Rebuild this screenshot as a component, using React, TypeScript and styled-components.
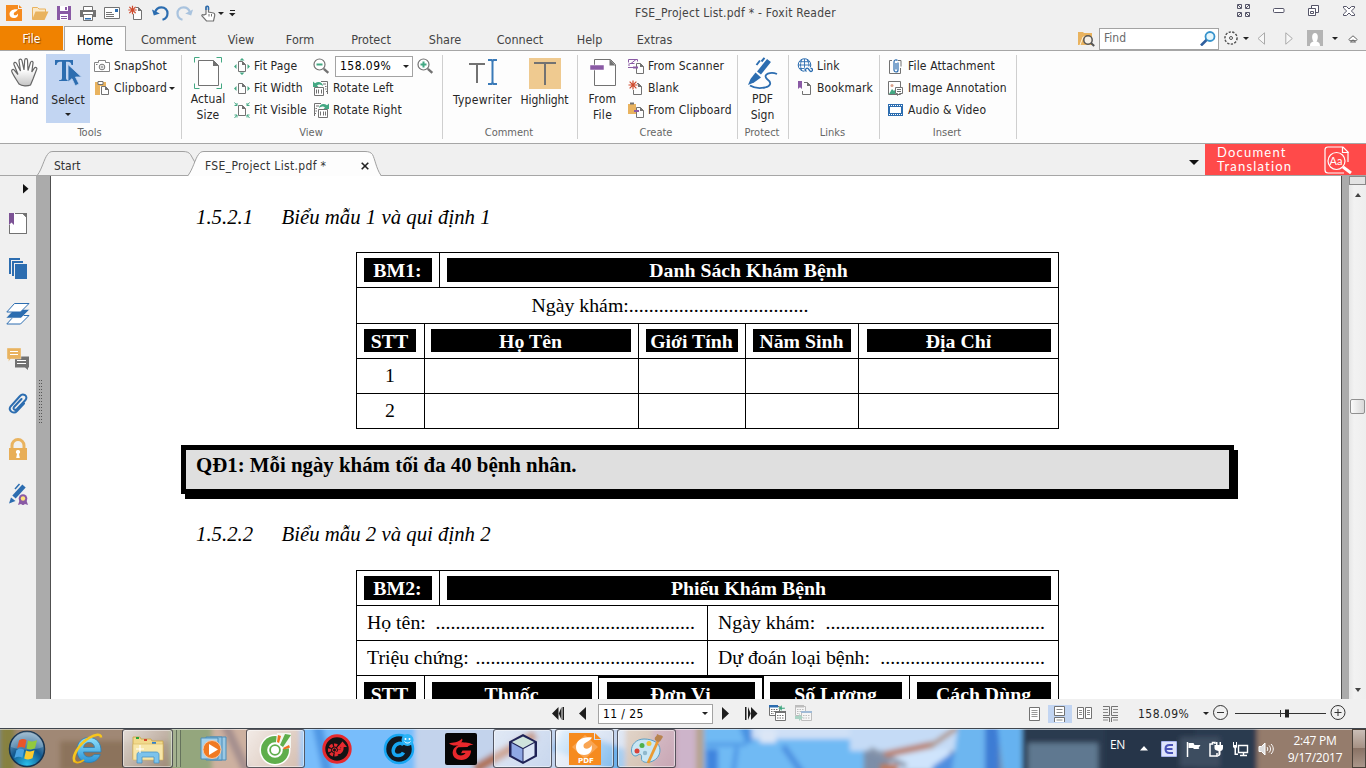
import React from 'react';
import styled, { createGlobalStyle } from 'styled-components';

const UI = '"DejaVu Sans Condensed", "DejaVu Sans", "Noto Sans", sans-serif';
const SERIF = '"Liberation Serif", "Times New Roman", serif';
const BLUE = '#2c6db0';
const GRAY = '#727272';
const GREEN = '#43a883';
const AMBER = '#e9b35f';
const PURPLE = '#8a5aa5';

const Global = createGlobalStyle`
  * { box-sizing: border-box; }
  body { margin: 0; overflow: hidden; background: #f0f0f0; }
  svg { display: block; flex: none; }
`;

/* ---------- shell ---------- */
const Window = styled.div`
  width: 1366px;
  height: 768px;
  display: flex;
  flex-direction: column;
  overflow: hidden;
  background: #f0f0f0;
  font-family: ${UI};
  font-stretch: condensed;
  font-size: 12px;
  color: #262626;
  white-space: nowrap;
`;

const TitleBar = styled.header`
  height: 26px;
  display: flex;
  align-items: center;
`;
const QuickAccess = styled.div`
  width: 635px;
  height: 26px;
  padding-left: 6px;
  display: flex;
  align-items: center;
`;
const Slot = styled.span<{ $w: number; $down?: number }>`
  width: ${p => p.$w}px;
  flex: none;
  display: flex;
  align-items: center;
  padding-top: ${p => Math.max(0, p.$down ?? 0)}px;
  padding-bottom: ${p => Math.max(0, -(p.$down ?? 0))}px;
`;
const TitleText = styled.div`
  width: 600px;
  padding-left: 0;
  font-size: 12px;
  letter-spacing: 0.24px;
  color: #444;
`;

const MenuRow = styled.nav`
  height: 25px;
  display: flex;
  border-bottom: 1px solid #a6a6a6;
`;
const FileTab = styled.div`
  width: 63px;
  height: 24px;
  line-height: 27px;
  text-align: center;
  font-size: 12px;
  background: #f08200;
  color: #fff;
  text-shadow: 1px 1px 1px #8a4a00;
`;
const MenuTab = styled.div<{ $w: number; $active?: boolean }>`
  width: ${p => p.$w}px;
  height: 25px;
  line-height: 27px;
  text-align: center;
  font-size: 12.5px;
  color: ${p => (p.$active ? '#000' : '#444')};
  ${p =>
    p.$active &&
    `background:#fdfdfd; border:1px solid #a6a6a6; border-bottom:0; margin-left:1px; line-height:26px; font-size:13.7px;`}
`;
const MenuTools = styled.div`
  margin-left: auto;
  width: 288px;
  display: flex;
  align-items: center;
  height: 24px;
`;
const FindBox = styled.div`
  width: 120px;
  height: 22px;
  margin-top: 1px;
  padding: 0 2px 2px 4px;
  border: 1px solid #a3a3a3;
  background: #fff;
  display: flex;
  align-items: center;
  justify-content: space-between;
  color: #6a6a6a;
`;

/* ---------- ribbon ---------- */
const Ribbon = styled.section`
  height: 93px;
  display: flex;
  background: #fdfdfd;
  border-bottom: 1px solid #a6a6a6;
`;
const Group = styled.div<{ $w: number }>`
  width: ${p => p.$w}px;
  display: flex;
  flex-direction: column;
  padding-top: 3px;
  background: linear-gradient(#cfcfcf, #cfcfcf) right 4px / 1px 84px no-repeat;
`;
const GroupBody = styled.div<{ $left?: number }>`
  height: 70px;
  display: flex;
  align-items: flex-start;
  padding-left: ${p => p.$left ?? 0}px;
`;
const GroupLabel = styled.div<{ $shift?: number }>`
  font-size: 11px;
  line-height: 20px;
  text-align: center;
  color: #666;
  padding-left: ${p => Math.max(0, p.$shift ?? 0)}px;
  padding-right: ${p => Math.max(0, -(p.$shift ?? 0))}px;
`;
const BigButton = styled.div<{ $w: number; $on?: boolean; $ls?: number }>`
  width: ${p => p.$w}px;
  height: 69px;
  display: flex;
  flex-direction: column;
  align-items: center;
  background: ${p => (p.$on ? '#c2d5f2' : 'transparent')};
  line-height: 16px;
  text-align: center;
  letter-spacing: ${p => p.$ls ?? 0}px;
`;
const BigIcon = styled.div`
  height: 38px;
  padding-top: 3px;
`;
const DropCaret = styled.div`
  height: 8px;
  display: flex;
  align-items: flex-end;
`;
const Col = styled.div<{ $w?: number }>`
  display: flex;
  flex-direction: column;
  padding-top: 1px;
  width: ${p => (p.$w ? `${p.$w}px` : 'auto')};
`;
const SmallButton = styled.div<{ $gap?: number }>`
  height: 22px;
  display: flex;
  align-items: center;
  gap: ${p => p.$gap ?? 4}px;
  letter-spacing: 0.15px;
`;
const ZoomField = styled.div`
  width: 78px;
  height: 21px;
  margin-left: 1px;
  padding: 0 3px 0 4px;
  border: 1px solid #a3a3a3;
  background: #fff;
  display: flex;
  align-items: center;
  justify-content: space-between;
  letter-spacing: 0.45px;
  color: #000;
`;
const Caret = styled.i<{ $c?: string }>`
  width: 0;
  height: 0;
  flex: none;
  border: 3px solid transparent;
  border-bottom: 0;
  border-top-color: ${p => p.$c ?? '#222'};
`;

/* ---------- document tabs ---------- */
const DocTabs = styled.div`
  height: 32px;
  display: flex;
  align-items: flex-end;
  border-bottom: 1px solid #a6a6a6;
  padding-left: 37px;
`;
const DocTab = styled.div<{ $w: number; $pad: number; $overlap?: boolean; $ls?: number }>`
  position: relative;
  width: ${p => p.$w}px;
  height: 25px;
  margin-left: ${p => (p.$overlap ? -7 : 0)}px;
  margin-bottom: -1px;
  padding: 4px 0 0 ${p => p.$pad}px;
  display: flex;
  align-items: center;
  letter-spacing: ${p => p.$ls ?? 0}px;
  color: #333;
  > svg.shape { position: absolute; left: 0; top: 0; }
  > span { position: relative; }
`;
const CloseMark = styled.span`
  margin-left: auto;
  margin-right: 12px;
`;
const TabListCaret = styled.div`
  margin: 0 6px 10px auto;
  border: 5px solid transparent;
  border-bottom: 0;
  border-top-color: #111;
`;
const Promo = styled.div`
  width: 161px;
  height: 31px;
  padding: 2px 13px 0 12px;
  background: #ff4a4a;
  color: #fff;
  display: flex;
  align-items: flex-start;
  justify-content: space-between;
  font: 13px/14px Lato, sans-serif;
  letter-spacing: 1.2px;
`;
const PromoText = styled.div`
  margin-top: -1px;
`;

/* ---------- workspace ---------- */
const Workspace = styled.main`
  height: 523px;
  display: flex;
`;
const SideBar = styled.aside`
  width: 36px;
  padding-top: 8px;
  display: flex;
  flex-direction: column;
  align-items: center;
`;
const SideTop = styled.div`
  height: 17px;
  width: 13px;
  margin-left: 23px;
`;
const SideItem = styled.div`
  height: 45px;
  display: flex;
  align-items: center;
  justify-content: center;
`;
const Gutter = styled.div`
  width: 14px;
  background: #ababab;
  display: flex;
  align-items: center;
  padding: 0 0 0 2px;
`;
const Grip = styled.div`
  width: 5px;
  height: 44px;
  margin-top: -71px;
  background: radial-gradient(circle at 0.5px 0.5px, #555 0.7px, transparent 0.8px) 1px 0 / 2px 3px;
`;
const Page = styled.article`
  width: 1292px;
  height: 523px;
  overflow: hidden;
  border-left: 1px solid #505050;
  border-right: 1px solid #505050;
  background: #fff;
  font-family: ${SERIF};
  color: #000;
`;
const Heading = styled.h3<{ $top: number }>`
  margin: ${p => p.$top}px 0 0 145px;
  font: italic 20.8px/24px ${SERIF};
  display: flex;
  span { width: 85.5px; }
`;
const Table = styled.div<{ $top: number }>`
  width: 703px;
  margin: ${p => p.$top}px 0 0 305px;
  border: 1px solid #000;
  border-width: 1px 0 0 1px;
  font-size: 19.8px;
`;
const Row = styled.div<{ $h?: number }>`
  display: flex;
  height: ${p => p.$h ?? 35}px;
`;
const Cell = styled.div<{ $w: number; $p?: string }>`
  width: ${p => p.$w}px;
  border: solid #000;
  border-width: 0 1px 1px 0;
  padding: ${p => p.$p ?? '5px 7px 0'};
  text-align: center;
  line-height: 24px;
`;
const Bar = styled.div<{ $h?: number }>`
  height: ${p => p.$h ?? 24}px;
  line-height: 25px;
  padding-right: 1px;
  background: #000;
  color: #fff;
  font-weight: bold;
`;
const Heavy = styled(Cell)`
  margin-left: -1px;
  border: solid #000;
  border-width: 2px 2px 0 1px;
`;
const Field = styled(Cell)`
  display: flex;
  justify-content: space-between;
  text-align: left;
  line-height: 25px;
`;
const Dots = styled.span`
  letter-spacing: 0.045px;
`;
const Rule = styled.div`
  width: 1053px;
  height: 49px;
  margin: 16px 0 0 130px;
  padding: 3px 10px;
  border: 5px solid #000;
  box-shadow: 4px 5px 0 #000;
  background: #dfdfdf;
  font-weight: bold;
  font-size: 20.85px;
  line-height: 24px;
`;
const RightGutter = styled.div`
  width: 7px;
  background: #ababab;
`;
const ScrollBar = styled.div`
  width: 17px;
  display: flex;
  flex-direction: column;
  align-items: center;
  background: linear-gradient(90deg, #e6e6e6, #f2f2f2 30%, #eee);
`;
const SplitBox = styled.div`
  width: 17px;
  height: 9px;
  border: 1px solid #888;
  background: #e3e3e3;
`;
const Thumb = styled.div`
  width: 15px;
  height: 15px;
  margin-top: 202px;
  border: 1px solid #909090;
  border-radius: 2px;
  background: linear-gradient(90deg, #fafafa, #d8d8d8);
`;
const UpArrow = styled.i`
  margin-top: 8px;
  border: 3.5px solid transparent;
  border-top: 0;
  border-bottom: 4px solid #444;
`;
const DownArrow = styled.i`
  margin-top: auto;
  margin-bottom: 7px;
  border: 3.5px solid transparent;
  border-bottom: 0;
  border-top: 4px solid #444;
`;

/* ---------- status bar ---------- */
const StatusBar = styled.div`
  height: 29px;
  padding-left: 552px;
  display: flex;
  align-items: center;
`;
const PageField = styled.div`
  width: 115px;
  height: 20px;
  margin-right: 8px;
  padding: 0 4px;
  border: 1px solid #a3a3a3;
  background: #fff;
  color: #000;
  display: flex;
  align-items: center;
  justify-content: space-between;
  letter-spacing: 0.4px;
`;
const ViewMode = styled.span<{ $w: number; $on?: boolean }>`
  width: ${p => p.$w}px;
  height: 18px;
  flex: none;
  display: flex;
  justify-content: center;
  align-items: center;
  background: ${p => (p.$on ? '#c2d5f2' : 'none')};
`;
const ZoomText = styled.span`
  width: 65px;
  letter-spacing: 0.45px;
`;

/* ---------- taskbar ---------- */
const TaskBar = styled.footer`
  position: relative;
  height: 40px;
  display: flex;
  align-items: center;
  background: #7d8ea8;
  border-top: 1px solid #3f454d;
`;
const Wallpaper = styled.svg`
  position: absolute;
  left: 0;
  top: 0;
`;
const TaskItem = styled.div<{ $w: number; $ml?: number; $lit?: number }>`
  position: relative;
  width: ${p => p.$w}px;
  height: 39px;
  margin-left: ${p => p.$ml ?? 0}px;
  flex: none;
  display: flex;
  align-items: center;
  justify-content: center;
  ${p =>
    p.$lit &&
    `border:1px solid rgba(30,30,40,.7); border-radius:3px;
     box-shadow: inset 0 0 0 1px rgba(255,255,255,.45);
     background: linear-gradient(125deg, rgba(255,255,255,${p.$lit}), rgba(255,255,255,${p.$lit * 0.2}));`}
`;
const StackEdge = styled.div`
  position: relative;
  width: 4px;
  height: 37px;
  border-right: 1px solid rgba(50, 60, 50, 0.55);
  background: rgba(255, 255, 255, 0.15);
`;
const Tray = styled.div`
  position: relative;
  margin-left: auto;
  display: flex;
  align-items: center;
  color: #fff;
`;
const Clock = styled.div`
  width: 74px;
  text-align: center;
  font: 12px/17px "Open Sans", sans-serif;
  letter-spacing: -0.25px;
`;
const Lang = styled.span`
  width: 30px;
  font: 12px/16px "Open Sans", sans-serif;
  margin-top: -7px;
  letter-spacing: -0.3px;
`;
const ShowDesktop = styled.div`
  width: 14px;
  height: 39px;
  border: 1px solid #4a4038;
  background: linear-gradient(rgba(255, 255, 255, 0.5), rgba(255, 255, 255, 0.15) 50%, rgba(120, 100, 90, 0.4) 50%, rgba(255, 255, 255, 0.2));
`;

/* ---------- drawings ---------- */
type IconProps = { w: number; h: number; children: React.ReactNode };
const Icon = ({ w, h, children }: IconProps) => (
  <svg width={w} height={h} viewBox={`0 0 ${w} ${h}`} fill="none">
    {children}
  </svg>
);

const MiniPage = ({ x, y, w = 8, h = 11, c = GRAY }: { x: number; y: number; w?: number; h?: number; c?: string }) => (
  <g>
    <path d={`M${x + 0.5} ${y + 0.5}h${w - 4}l3 3v${h - 4}h-${w - 1}z`} fill="#fdfdfd" stroke={c} />
    <path d={`M${x + w - 4} ${y}v4h4z`} fill={c} />
  </g>
);
const Burst = ({ cx, cy, r = 4.5 }: { cx: number; cy: number; r?: number }) => (
  <path
    d={`M${cx - r} ${cy}h${2 * r}M${cx} ${cy - r}v${2 * r}M${cx - r * 0.75} ${cy - r * 0.75}l${r * 1.5} ${r * 1.5}M${cx + r * 0.75} ${cy - r * 0.75}l${-r * 1.5} ${r * 1.5}`}
    stroke="#cf4a2c"
    strokeWidth="1.2"
  />
);

const FoxitLogo = () => (
  <Icon w={16} h={16}>
    <path d="M0 0h12v4h4v12H0z" fill="#f68b1f" />
    <path d="M13 0l3 3h-3z" fill="#f68b1f" />
    <path d="M12 4.300C6.800 3.500 3.500 6 3.500 9c0 2.500 1.800 4 4.300 4 3.200 0 4.700-2 4-4.600-1 2.400-4 2.600-4 .5C7.800 7 10 7.300 12 4.300z" fill="#fff" />
  </Icon>
);
const OpenFolder = () => (
  <Icon w={17} h={15}>
    <path d="M.5 13V1.500h5l1.500 1.500h6.500V6" stroke={AMBER} fill="#fbe9c8" />
    <path d="M3.500 5.500h13L12.500 14H0z" fill={AMBER} />
  </Icon>
);
const SaveIcon = () => (
  <Icon w={14} h={14}>
    <path d="M0 0h14v14H0z" fill={PURPLE} />
    <path d="M3 0h8v5H3zM3 8h8v6H3z" fill="#fff" />
    <path d="M8 1h2v3H8zM4 10h6v1H4zM4 12h6v1H4z" fill={PURPLE} />
  </Icon>
);
const PrintIcon = () => (
  <Icon w={16} h={15}>
    <path d="M3.500 4V.5h9V4" stroke={GRAY} fill="#fff" />
    <path d="M0 4h16v7H0z" fill={GRAY} />
    <path d="M3 6h10v2H3z" fill="#fff" />
    <path d="M3.500 8.500h9v6h-9z" fill="#fff" stroke={GRAY} />
    <path d="M5 12h6v1.500H5z" fill={BLUE} />
  </Icon>
);
const MailIcon = () => (
  <Icon w={16} h={12}>
    <path d="M.5.5h15v11H.5z" fill="#fff" stroke={GRAY} />
    <path d="M11 2h3v3h-3z" fill={BLUE} />
    <path d="M2 5.500h6M2 7.500h8M2 9.500h8" stroke={GRAY} />
  </Icon>
);
const NewPageIcon = () => (
  <Icon w={15} h={16}>
    <MiniPage x={5} y={2} w={9} h={13} />
    <path d="M3 2h5v7H3z" fill="#f0f0f0" />
    <Burst cx={4.5} cy={5} r={4.2} />
  </Icon>
);
const UndoIcon = ({ c, flip }: { c: string; flip?: boolean }) => (
  <Icon w={17} h={15}>
    <g transform={flip ? 'translate(17 0) scale(-1 1)' : undefined}>
      <path d="M3 6.500C4 3 6.500 1.300 9.500 1.300c3.500 0 6 2.700 6 6 0 3-2 5.700-5 6.500" stroke={c} strokeWidth="2.200" />
      <path d="M0 3.500l1.800 6 6-2z" fill={c} />
    </g>
  </Icon>
);
const FingerIcon = () => (
  <Icon w={15} h={17}>
    <path d="M5 9V2.500C5 .8 7.500.8 7.500 2.500V7l5 1c1.500.4 1.500 1.500 1 3.500l-1 4.500H5.500L1 11c-.6-1.200.8-1.800 1.800-1z" stroke={GRAY} strokeWidth="1.200" fill="#fff" />
    <path d="M5 5V2.500C5 .8 7.500.8 7.500 2.500V5" stroke={BLUE} strokeWidth="1.500" />
    <path d="M8 9v2.500M10.500 9v2.500" stroke={GRAY} />
  </Icon>
);

const HandIcon = () => (
  <svg width="27" height="30" viewBox="0 0 27 30">
    <defs>
      <linearGradient id="palm" x1="0" y1="0" x2="0" y2="1">
        <stop offset="0.4" stopColor="#fff" />
        <stop offset="1" stopColor="#c4c4c4" />
      </linearGradient>
    </defs>
    <path
      d="M8 27C5 22 2 18 .8 14.500c-.6-2 1.500-2.700 2.700-1.200L7 17.500 3 7.500c-.7-2.300 1.700-3 2.600-1L9.500 14 8 4c-.2-2.300 2.400-2.600 3-.4L13 13l.7-9.800c.2-2 2.600-2 2.800 0L17 13.500l2.500-8c.7-2 2.900-1.400 2.500.7L20.800 15l2.500-3.800c1.200-1.600 3-.6 2.400 1.100L22 22l-2.500 6c-3 1.300-8.500 1.300-11.500-1z"
      fill="url(#palm)"
      stroke="#666"
      strokeWidth="1.200"
    />
  </svg>
);
const SelectIcon = () => (
  <Icon w={27} h={30}>
    <path d="M0 3h18v5h-1.500C16 5.500 15 4.800 13 4.800h-2V21c0 1.700.8 2.100 3 2.300v.7H4v-.7c2.200-.2 3-.6 3-2.300V4.800H5C3 4.800 2 5.500 1.500 8H0z" fill={BLUE} />
    <path d="M13 7.500l13.500 12.500h-6l3.500 7-3.700 1.700-3.300-7L13 25z" fill={BLUE} stroke="#c2d5f2" strokeWidth=".8" />
  </Icon>
);
const CameraIcon = () => (
  <Icon w={16} h={13}>
    <path d="M.5 2.500h4v-2h7v2h4v9H.5z" stroke="#858585" fill="#fff" />
    <circle cx="8" cy="7" r="2.800" stroke="#777" />
    <circle cx="8" cy="7" r="1" stroke="#777" strokeWidth=".7" />
    <path d="M2 4.500h1.500" stroke="#777" />
  </Icon>
);
const ClipboardIcon = () => (
  <Icon w={16} h={16}>
    <path d="M1 2h11v4H6v9H1z" fill={AMBER} />
    <path d="M4 1.500h5v3H4z" fill="#fff" stroke={GRAY} />
    <MiniPage x={7} y={6} w={8} h={9} />
  </Icon>
);
const ActualSizeIcon = () => (
  <Icon w={28} h={32}>
    <path d="M.5 5.500v-5h5M22.500.5h5v5M27.500 26.500v5h-5M5.500 31.500h-5v-5" stroke={GREEN} />
    <path d="M4.500 3.500h15l5 5v20h-20z" fill="#fff" stroke={GRAY} />
    <path d="M19 3l6 6h-6z" fill={GRAY} />
  </Icon>
);
const FitIcon = ({ kind }: { kind: 'page' | 'width' | 'visible' }) => (
  <Icon w={16} h={17}>
    <MiniPage x={4} y={3} w={8} h={11} />
    {kind !== 'visible' && <path d="M2.500 6v5L0 8.500zM13.500 6v5L16 8.500z" fill={GREEN} />}
    {kind === 'page' && <path d="M5.500 2.500h5L8 0zM5.500 14.500h5L8 17z" fill={GREEN} />}
    {kind === 'visible' && (
      <path d="M.5.500l2.500 3M.5 3.500H3V1M15.500.500l-2.500 3M15.500 3.500H13V1M.5 16l2.500-3M.5 13H3v2.500M15.500 16L13 13M15.500 13H13v2.500" stroke={GREEN} />
    )}
  </Icon>
);
const Magnifier = ({ plus }: { plus?: boolean }) => (
  <Icon w={17} h={16}>
    <circle cx="6.500" cy="6.500" r="5.500" fill="#fff" stroke={GRAY} strokeWidth="1.200" />
    <path d="M10.800 10.800l4.500 4" stroke={GRAY} strokeWidth="2.400" />
    <path d={plus ? 'M3.500 6.500h6M6.500 3.500v6' : 'M3.500 6.500h6'} stroke={GREEN} strokeWidth="2" />
  </Icon>
);
const RotateIcon = ({ right }: { right?: boolean }) => (
  <Icon w={16} h={17}>
    <g transform={right ? 'translate(16 0) scale(-1 1)' : undefined}>
      <path d="M8 1.500h6.500V14" stroke={GRAY} />
      <path d="M10 4h3M12 6.500h1.500M12 9h1.500M13 11.500h1" stroke={GRAY} />
      <path d="M1.500 7.500h9v8h-9z" stroke={GRAY} fill="#fff" />
      <path d="M3.500 9.500v4M5.500 9.500v4M8.500 9.500v4" stroke={GRAY} />
      <path d="M0 1.500v5.500h5.500L4 5.400c2-1.600 4.500-.9 6 .9C10 2.500 5.500.5 2 3.300z" fill={GREEN} />
    </g>
  </Icon>
);
const TypewriterIcon = () => (
  <Icon w={30} h={29}>
    <path d="M1 7h16M9 7v19" stroke={GRAY} strokeWidth="2" />
    <path d="M20 3h3.500l1 1.500 1-1.500H29M20 27h3.500l1-1.500 1 1.500H29M24.500 3v24" stroke="#3a7ab8" strokeWidth="2" />
  </Icon>
);
const HighlightIcon = () => (
  <Icon w={32} h={32}>
    <path d="M0 1h32v31H0z" fill="#efca90" />
    <path d="M5 6h22M16 6v22" stroke={GRAY} strokeWidth="2" />
  </Icon>
);
const FromFileIcon = () => (
  <Icon w={26} h={30}>
    <path d="M4.500 2.500h16l5 5v21h-21z" stroke={GRAY} fill="#fff" />
    <path d="M19.500 2l6 6.500h-6z" fill={GRAY} />
    <path d="M0 8h14v5H0z" fill={PURPLE} stroke="#fdfdfd" strokeWidth=".5" />
  </Icon>
);
const ScannerIcon = () => (
  <Icon w={16} h={16}>
    <path d="M.5 4.500v-3h9v2M1.500 5.500h5M0 9.500h6M1 8V5.500" stroke={PURPLE} />
    <path d="M8 1.500L3 5.500" stroke={PURPLE} />
    <MiniPage x={8} y={5} w={8} h={11} />
    <path d="M5 8.500h5v2H5z" fill={PURPLE} />
  </Icon>
);
const BlankIcon = () => (
  <Icon w={16} h={16}>
    <MiniPage x={5} y={3} w={9} h={12} />
    <path d="M4 3h5v7H4z" fill="#fdfdfd" />
    <Burst cx={5} cy={5} />
  </Icon>
);
const FromClipIcon = () => (
  <Icon w={16} h={16}>
    <path d="M0 2h8v10H0z" fill={AMBER} />
    <path d="M2 .5h4v2H2z" fill={GRAY} />
    <MiniPage x={8} y={5} w={8} h={11} />
    <path d="M6 8h5v2H6z" fill={PURPLE} />
  </Icon>
);
const SignIcon = () => (
  <Icon w={32} h={32}>
    <path d="M12 16l10-12.500" stroke={BLUE} strokeWidth="5" />
    <path d="M13 3.500L9.500 8M17.500.8l-3 3.700" stroke={BLUE} strokeWidth="2" />
    <path d="M8.500 15.500l5.500 5L7 25.500l-6 2.500 2.500-6z" fill={BLUE} />
    <path d="M30 17c-6-2.500-15 0-10 5 5 3.500 4 7-2 8.500-5 1-11 .5-15-2" stroke={BLUE} strokeWidth="1.800" />
  </Icon>
);
const LinkIcon = () => (
  <Icon w={16} h={16}>
    <circle cx="7.500" cy="7" r="6.300" stroke={BLUE} />
    <path d="M1 7h13M2.500 3.700h10M2.500 10.500h7M7.500 1v12M5 1.500c-2 3.500-2 7.500 0 11M10 1.500c1.800 3 1.900 4.500 1.800 7" stroke={BLUE} strokeWidth=".9" />
    <path d="M7.500 9.500H16V16H7.500z" fill="#fdfdfd" />
    <path d="M9.500 13.500a1.700 1.700 0 1 1 2.300-2l1.200 1.500a1.500 1.500 0 1 0 .5-2.500" stroke={BLUE} strokeWidth="1.300" />
  </Icon>
);
const BookmarkIcon = () => (
  <Icon w={16} h={15}>
    <path d="M7 1.500h3.500l3 3v9h-8V10" stroke={GRAY} />
    <path d="M10 1v4h4z" fill={GRAY} />
    <path d="M1 0h4v8L3 6.200 1 8z" fill={PURPLE} />
  </Icon>
);
const AttachIcon = () => (
  <Icon w={16} h={17}>
    <path d="M4 2.500H1.500v13h11V10M10 2.500h3v6" stroke={GRAY} />
    <path d="M10 4.500v7.500a2 2 0 0 1-4 0V4a2 2 0 0 1 3.500-1.500M8 5v6.500" stroke={BLUE} strokeWidth="1.200" />
  </Icon>
);
const ImageNoteIcon = () => (
  <Icon w={16} h={17}>
    <path d="M.5 1.500h12v13H.5z" stroke={GRAY} fill="#fff" />
    <path d="M1 14l3-5 2 2 1.500-2V14z" fill={GREEN} />
    <circle cx="4" cy="5.500" r="1.500" fill="#d9a18a" />
    <path d="M7.500 7.500h7v6h-3l-2 2v-2h-2z" stroke={GRAY} fill="#fff" />
    <path d="M9 9.500h4M9 11.500h4" stroke={GRAY} />
  </Icon>
);
const FilmIcon = () => (
  <Icon w={16} h={12}>
    <path d="M0 0h15v12H0z" fill={BLUE} />
    <path d="M2 3h11v6H2z" fill="#fff" />
    <path d="M1 1.500h14M1 10.500h14" stroke="#fff" strokeDasharray="1 1" />
  </Icon>
);

const FullScreenIcon = () => (
  <Icon w={14} h={14}>
    {[[0, 0], [8, 0], [0, 8], [8, 8]].map(([x, y], i) => (
      <g key={i} stroke="#555568">
        <path d={`M${x + 0.5} ${y + 0.5}h4v4h-4z`} />
        <path d={i === 0 || i === 3 ? `M${x + 1} ${y + 1}l3 3` : `M${x + 4} ${y + 1}l-3 3`} />
      </g>
    ))}
  </Icon>
);
const MinIcon = () => (
  <Icon w={12} h={6}>
    <rect x=".5" y=".5" width="10.500" height="4" rx="1" stroke="#555568" fill="#fff" />
  </Icon>
);
const RestoreIcon = () => (
  <Icon w={12} h={12}>
    <path d="M3.500 3.500v-3h7v7h-3" stroke="#555568" fill="#fff" />
    <path d="M.5 3.500h7v7h-7zM2.500 6.500h3v2h-3z" stroke="#555568" fill="#fff" />
  </Icon>
);
const CloseIcon = () => (
  <Icon w={12} h={10}>
    <path d="M.5.500h3L6 3 8.500.500h3V2L8.300 5l3.200 3v1.500h-3L6 7 3.500 9.500h-3V8l3.200-3L.5 2z" stroke="#555568" fill="#fff" />
  </Icon>
);

const Bookmarks = () => (
  <Icon w={18} h={22}>
    <path d="M6 .5h8l3.500 3.500v16.500H.5V13" stroke={GRAY} fill="#fff" />
    <path d="M1 0h12v20H1z" fill="#fff" />
    <path d="M6 .5h8l3.500 3.500v16.500H.5V12" stroke={GRAY} />
    <path d="M13 0h5v5z" fill={GRAY} />
    <path d="M0 0h5v12l-2.500-2.500L0 12z" fill="#7c5295" />
  </Icon>
);
const PagesIcon = () => (
  <Icon w={18} h={22}>
    <path d="M0 0h11v2H2v14H0zM3 3h11v2H5v13H3zM6 6h12v15H6z" fill={BLUE} />
  </Icon>
);
const LayersIcon = () => (
  <Icon w={24} h={22}>
    <path d="M8.500 12.500H23L14.500 21H.8z" stroke={BLUE} fill="#fff" />
    <path d="M8 6.500h15.500L15 15H0z" fill={BLUE} stroke="#f0f0f0" strokeWidth=".5" />
    <path d="M8.500.500H23L14.500 9H.8z" stroke={BLUE} fill="#fff" />
  </Icon>
);
const CommentsIcon = () => (
  <Icon w={22} h={22}>
    <path d="M8 8.500h14v11h-1V22l-3-2.500H8z" fill={GRAY} />
    <path d="M0 0h14v11H3.500L1.500 13.500V11H0z" fill={AMBER} stroke="#f0f0f0" strokeWidth=".4" />
    <path d="M3 3.500h8M3 6.500h8M10 12.500h9M10 15.500h9" stroke="#fff" />
  </Icon>
);
const ClipIcon = () => (
  <Icon w={20} h={22}>
    <path d="M16 10.500l-7 7.500c-3 3.500-9.500 0-6.500-4.500L12 3c3-3.500 8.500 0 5.500 4L9 16c-2 2-4.500 0-3-2l7.500-8" stroke={BLUE} strokeWidth="2" strokeLinecap="round" />
  </Icon>
);
const LockIcon = () => (
  <Icon w={18} h={22}>
    <path d="M3 11V7.500a6 6 0 0 1 12 0V11" stroke={AMBER} strokeWidth="3" />
    <path d="M0 10h18v12H0z" fill="#e8ae57" />
    <path d="M9 12a2 2 0 0 1 1 3.800l.8 4.200H7.200L8 15.800A2 2 0 0 1 9 12z" fill="#fff" />
  </Icon>
);
const SealIcon = () => (
  <Icon w={20} h={22}>
    <path d="M6 14L16 3" stroke={BLUE} strokeWidth="4.500" />
    <path d="M1 20.500l2-6 4.500 3.500z" fill={BLUE} />
    <path d="M7 6l4.500-5" stroke={BLUE} strokeWidth="1.500" />
    <path d="M12 16l-2 6 3-1 1.500 1h1L17 21l3 1-2-6z" fill={PURPLE} />
    <circle cx="15" cy="15.500" r="4.300" fill={PURPLE} />
    <circle cx="15" cy="15.500" r="2.200" fill="#ffe27a" />
  </Icon>
);

const ThumbsIcon = ({ faded }: { faded?: boolean }) => (
  <svg width="17" height="17" viewBox="0 0 17 17" fill="none" opacity={faded ? 0.4 : 1}>
    <path d="M.5 1.500h10v9H.5z" stroke={GRAY} fill="#fff" />
    <path d="M0 0h9v2.500H0z" fill={faded ? GRAY : BLUE} />
    <path d="M2 4.500h7M2 6.500h4M2 8.500h3" stroke={GRAY} strokeDasharray="1.500 1" />
    <path d="M6.500 6.500h10v9h-10z" stroke={GRAY} fill="#fff" />
    <path d="M6 6h11v2H6z" fill={faded ? BLUE : GRAY} />
    <path d="M8 10.500h7M8 13h7" stroke={GRAY} strokeDasharray="1.500 1" />
    {faded ? <path d="M0 11h4V9l4 3.500L4 16v-2H0z" fill={GREEN} /> : <path d="M16 2.500h-3V0L9 3 13 6V4h3z" fill={GREEN} stroke="#f0f0f0" strokeWidth=".4" />}
  </svg>
);
const SheetIcon = () => (
  <Icon w={11} h={14}>
    <path d="M.5.500h10v13H.5z" stroke={GRAY} fill="#fff" />
    <path d="M2.500 3.500h6M2.500 5.500h6M2.500 7.500h6M2.500 9.500h6" stroke="#999" />
  </Icon>
);
const ContinuousIcon = () => (
  <Icon w={12} h={16}>
    <path d="M.5.500h10v9H.5zM.5 16v-4.500h10V16" stroke={GRAY} fill="#fff" />
    <path d="M2.500 3.500h6M2.500 6.500h6M2.500 14h6" stroke="#888" />
  </Icon>
);
const FacingIcon = () => (
  <Icon w={15} h={13}>
    <path d="M.5.500h6v11h-6zM8.500.500h6v11h-6z" stroke={GRAY} fill="#fff" />
    <path d="M2 3.500h3M2 5.500h3M2 7.500h3M10 3.500h3M10 5.500h3M10 7.500h3" stroke="#888" />
  </Icon>
);
const FacingContinuousIcon = () => (
  <Icon w={15} h={16}>
    <path d="M0 .5h6.500v9H0M15 .5H8.500v9H15M0 11.500h6.500V16M15 11.500H8.500V16" stroke={GRAY} />
    <path d="M0 3.500h5M0 6.500h5M10 3.500h5M10 6.500h5M0 14h5M10 14h5" stroke="#888" />
  </Icon>
);

const StartOrb = () => (
  <svg width="38" height="38" viewBox="0 0 38 38">
    <defs>
      <radialGradient id="orb" cx=".5" cy=".95" r=".95">
        <stop offset="0" stopColor="#29c0ec" />
        <stop offset=".5" stopColor="#12588e" />
        <stop offset="1" stopColor="#8fb0c8" />
      </radialGradient>
    </defs>
    <circle cx="19" cy="19" r="17.500" fill="url(#orb)" stroke="#173450" strokeWidth="1.500" />
    <path d="M3 17a16 15.500 0 0 1 32 0c-10 3.500-22 3.500-32 0z" fill="#fff" opacity=".22" />
    <path d="M11 10.500c3-2 5-1.800 7.500-.5l-1.700 8c-2.500-1.300-5-1.300-7.700.2z" fill="#e8562a" />
    <path d="M20 10.500c3 1.300 5.500 1.300 9-.2l-2 8c-2.600 1.400-5.700 1.400-8.500.2z" fill="#92c93e" />
    <path d="M8.500 20c3-1.700 5-1.500 7.800-.2l-1.900 8c-2.300-1.300-4.800-1.300-8 .2z" fill="#4aa3e0" />
    <path d="M18 20.500c2.800 1.200 5.500 1.200 8.500-.2l-2 8c-2.800 1.500-5.700 1.500-8.300.2z" fill="#fccb2e" />
  </svg>
);
const IeIcon = () => (
  <svg width="32" height="32" viewBox="0 0 32 32" fill="none">
    <defs>
      <linearGradient id="ie" x1="0" y1="0" x2="0" y2="1">
        <stop offset="0" stopColor="#8fe0fb" />
        <stop offset="1" stopColor="#2a93d6" />
      </linearGradient>
    </defs>
    <path d="M29 19H11.500c.4 3.500 2.500 5 5.500 5 2.300 0 4-1 5-2.500h6.300C26.500 26.500 22.500 29.500 17 29.500c-7.500 0-12-5-12-12.500S10 4.500 17 4.500c7.500 0 12.500 5.500 12 14.500zM11.500 14.500h11c-.2-3-2.300-5-5.300-5s-5.200 1.800-5.700 5z" fill="url(#ie)" stroke="#2b7fb5" strokeWidth=".8" />
    <path d="M3 29C-1 24 7 11 17 5c6-3.600 12-4.800 12-.5" stroke="#f7c61d" strokeWidth="2.600" />
    <path d="M3 28.500c2 2 6 .5 9-1.500" stroke="#f0b514" strokeWidth="1.800" />
  </svg>
);
const ExplorerIcon = () => (
  <Icon w={32} h={32}>
    <path d="M1 4h7l1 2h10l1 2h11v18H1z" fill="#f1d98c" stroke="#c9a348" strokeWidth=".8" />
    <path d="M4 4h3v2H4z" fill="#2aa33a" />
    <path d="M12 6h3v2h-3z" fill="#d3442c" />
    <path d="M20 9h4v2h-4z" fill="#2f80cf" />
    <path d="M1 11h30v16H1z" fill="#f7e6a8" stroke="#d6b75c" strokeWidth=".6" />
    <path d="M5 30v-8c0-2 1-3 3-3h16c2 0 3 1 3 3v8h-5v-6H10v6z" fill="#7cc3ec" stroke="#4a93c4" strokeWidth=".8" />
    <path d="M4 16h8M8 12v8" stroke="#fff" strokeWidth="1.200" />
  </Icon>
);
const MediaIcon = () => (
  <Icon w={28} h={28}>
    <path d="M10 2h16v23H10z" fill="#9cc9e4" stroke="#4d8db8" />
    <path d="M6 2h16v23H6z" fill="#8fc2e2" stroke="#4d8db8" />
    <path d="M1 3h17v21H1z" fill="#a5d2ec" stroke="#4d8db8" />
    <circle cx="12" cy="14.500" r="9" fill="#f07a22" stroke="#f6c9a6" />
    <path d="M9 9l9 5.500L9 20z" fill="#fff" />
  </Icon>
);
const CocIcon = () => (
  <Icon w={34} h={34}>
    <circle cx="16" cy="18" r="15.500" fill="#fff" />
    <circle cx="16" cy="18" r="14" fill="#5fae4c" />
    <path d="M16 18L18 1h14v15z" fill="#f4f6f0" />
    <circle cx="16" cy="18" r="6.800" fill="#5fae4c" stroke="#fff" strokeWidth="2" />
    <circle cx="16" cy="18" r="4" fill="#fff" />
    <path d="M18 10l1-7 3 1-2 7z" fill="#f0701f" />
    <path d="M21 13l5-11 6 1-8 12z" fill="#5fae4c" />
    <path d="M24 16l6-3 1 2.500-6 2z" fill="#f0701f" />
  </Icon>
);
const GearRedIcon = () => (
  <Icon w={30} h={30}>
    <circle cx="15" cy="15" r="13.200" fill="#141414" stroke="#e62a2f" strokeWidth="3" />
    <circle cx="12.500" cy="16" r="5" stroke="#e62a2f" strokeWidth="3.200" strokeDasharray="3.200 1.300" />
    <circle cx="12.500" cy="16" r="2" stroke="#e62a2f" />
    <path d="M13 19h3c3 0 4.500-3 4.500-7" stroke="#e62a2f" strokeWidth="2.600" />
    <path d="M16 13l4.500-5.500L25 13z" fill="#e62a2f" />
  </Icon>
);
const CBlueIcon = () => (
  <Icon w={32} h={32}>
    <circle cx="16" cy="16" r="14" fill="#121820" stroke="#17a6f2" strokeWidth="2.500" />
    <path d="M20.500 12c-2-3-7.500-2-9.500 2.500C9 19 11 22.500 15 22.500c2.500 0 4.500-1 5.500-3" stroke="#17a6f2" strokeWidth="3.500" />
    <circle cx="24.500" cy="7" r="6" fill="#2bb4f7" />
    <circle cx="22.500" cy="6" r="1" fill="#fff" />
    <circle cx="26.500" cy="6" r="1" fill="#fff" />
    <path d="M21.500 8.500c1.500 2 4.500 2 6 0" stroke="#fff" />
  </Icon>
);
const GarenaIcon = () => (
  <Icon w={32} h={32}>
    <rect width="32" height="32" rx="2" fill="#060606" />
    <path d="M4 10.500c4-1.500 9-.5 13-5 1 2 0 3-1 3.800C20 9.500 25 9.500 28.500 12c-3-.2-4.500.3-6 2l-9 .3c-2.800 1.500-3.500 6 .5 8 3 .5 5.500-.3 6.500-2.300l-4.500.2 1.500-2.700h8.500c0 5.500-4 9.500-9.500 9.500C10 27 6.500 22.500 8 17.500c.8-2.500 2.500-4 5.500-5.500-3.500 1-6 .8-9.500-1.500z" fill="#e8282c" />
  </Icon>
);
const CubeIcon = () => (
  <Icon w={32} h={32}>
    <path d="M16 1l14 7.500v15L16 31 2 23.500v-15z" fill="#1f2256" />
    <path d="M16 3.500l11 5.500-11 6L5 9z" fill="#cfe3dc" />
    <path d="M4.500 10L15.500 16v12.500L4.500 22.500z" fill="#8fa8e4" />
    <path d="M27.500 10L16.500 16v12.500l11-6z" fill="#dbe5f6" />
  </Icon>
);
const PdfWord = styled.text`
  font: bold 7px "DejaVu Sans", sans-serif;
`;
const FoxitBig = () => (
  <Icon w={32} h={32}>
    <path d="M0 0h25v7h7v25H0z" fill="#f68b1f" />
    <path d="M26 0l6 6h-6z" fill="#f68b1f" />
    <path d="M16 2l13 12-13 12L3 14z" fill="#f9a553" />
    <path d="M23 4.500C14 3 7 7 7 14c0 5 3.500 8 8 8 6 0 9-4.500 7.500-10-1.500 5-8.500 5-8 .5C15 9 20 9.500 23 4.500z" fill="#fff" />
    <PdfWord x="9" y="30" fill="#fff">PDF</PdfWord>
  </Icon>
);
const PaintIcon = () => (
  <Icon w={34} h={32}>
    <path d="M14 6C6 6 1 12 1.500 18c.4 5 4 6 6.500 4 2.500-1.800 4 0 3.500 3-.5 4 4 5 8.500 4 6-1.500 10-6 10-12C30 10 23 6 14 6z" fill="#c9e6f4" stroke="#5c9fc4" />
    <circle cx="7" cy="18" r="2.500" fill="#d8433a" />
    <circle cx="12" cy="12.500" r="2.500" fill="#4fb04b" />
    <circle cx="19" cy="10.500" r="2.500" fill="#f3c53a" />
    <circle cx="15" cy="20" r="2.200" fill="#8fb8cc" />
    <path d="M28 8L18 30" stroke="#ea9a33" strokeWidth="2.800" />
    <path d="M25 7c-1-4 2-3 2-6 3 2 5 .5 6 3-2 2-2 5-5 5z" fill="#b8834f" />
  </Icon>
);

/* x, y, width, height, colour, rotation */
const blots: [number, number, number, number, string, number?][] = [
  [0, 0, 20, 40, '#87813f'],
  [15, 0, 155, 40, '#a08874'],
  [60, 12, 120, 30, '#8c735c'],
  [170, 0, 45, 40, '#94a67d'],
  [212, 0, 94, 40, '#cdb1a0'],
  [232, 0, 9, 40, '#a58f8e', -25],
  [300, 0, 120, 40, '#78bdfb'],
  [318, 0, 10, 45, '#4f97e4', -12],
  [415, 0, 230, 40, '#c3d3ec'],
  [470, 18, 70, 10, '#b0755c', -30],
  [555, 10, 80, 26, '#6db0ea', 20],
  [625, 0, 30, 40, '#c8b09c'],
  [652, 0, 28, 40, '#c29cab'],
  [676, 0, 22, 40, '#cdb4ca'],
  [696, 0, 9, 40, '#b5a38e'],
  [704, 0, 160, 40, '#70baf4'],
  [706, 20, 12, 30, '#4184de', 0],
  [706, 14, 40, 3, '#4a93e2'],
  [742, -6, 10, 20, '#4a93e2', -20],
  [733, 18, 4, 26, '#4b93e4', 8],
  [790, 14, 6, 34, '#4b8fe0', -35],
  [752, -14, 220, 24, '#cfe0f6'],
  [760, 0, 16, 14, '#dbe6f6'],
  [850, -4, 110, 26, '#c5dbf6'],
  [890, 20, 60, 22, '#cfe4fc'],
  [868, 26, 40, 5, '#8b97ab', 25],
  [884, 17, 50, 7, '#b98271', -12],
  [926, 6, 34, 5, '#b0988c', -35],
  [880, 35, 18, 12, '#bf7c60'],
  [936, 28, 28, 26, '#4f8fe0', -35],
  [955, 0, 34, 40, '#6db6f0', 8],
  [985, 0, 14, 40, '#3c7bd4'],
  [1000, 0, 24, 40, '#66b2f0', -6],
  [1022, 0, 240, 40, '#2b3b4f'],
  [1028, 14, 70, 30, '#5f7890'],
  [1105, 0, 90, 40, '#263648'],
  [1180, 8, 40, 30, '#3c4d60'],
  [1257, 0, 110, 40, '#957c6c'],
];

const TaskWallpaper = () => (
  <Wallpaper width="1366" height="40" viewBox="0 0 1366 40">
    <defs>
      <filter id="soft" x="-5%" y="-100%" width="110%" height="300%">
        <feGaussianBlur stdDeviation="2.600" />
      </filter>
    </defs>
    <g filter="url(#soft)">
      {blots.map(([x, y, w, h, fill, r], i) => (
        <rect key={i} x={x} y={y === 0 && h >= 40 ? -12 : y} width={w} height={y === 0 && h >= 40 ? h + 24 : h} fill={fill} transform={r ? `rotate(${r} ${x + w / 2} ${y + h / 2})` : undefined} />
      ))}
    </g>
    <path d="M0 .5h1366" stroke="#fff" opacity=".5" />
  </Wallpaper>
);

/* ---------- data ---------- */
const menuTabs: [string, number][] = [
  ['Comment', 85],
  ['View', 60],
  ['Form', 58],
  ['Protect', 84],
  ['Share', 64],
  ['Connect', 86],
  ['Help', 53],
  ['Extras', 77],
];
const sideIcons = [Bookmarks, PagesIcon, LayersIcon, CommentsIcon, ClipIcon, LockIcon, SealIcon];
const listCols: [string, number, string][] = [
  ['STT', 68, '5px 8px 0 7px'],
  ['Họ Tên', 214, '5px 7px 0 6px'],
  ['Giới Tính', 107, '5px 7px 0 7px'],
  ['Năm Sinh', 113, '5px 7px 0 7px'],
  ['Địa Chỉ', 200, '5px 7px 0 8px'],
];
const dots = (n: number) => '.'.repeat(n);

export default function App() {
  return (
    <Window>
      <Global />
      <TitleBar>
        <QuickAccess>
          <Slot $w={26}><FoxitLogo /></Slot>
          <Slot $w={25}><OpenFolder /></Slot>
          <Slot $w={23}><SaveIcon /></Slot>
          <Slot $w={24}><PrintIcon /></Slot>
          <Slot $w={24}><MailIcon /></Slot>
          <Slot $w={24}><NewPageIcon /></Slot>
          <Slot $w={24}><UndoIcon c={BLUE} /></Slot>
          <Slot $w={25}><UndoIcon c="#a9c3de" flip /></Slot>
          <Slot $w={17}><FingerIcon /></Slot>
          <Slot $w={11}><Caret /></Slot>
          <Slot $w={10}>
            <Icon w={7} h={7}><path d="M1 .5h5" stroke="#222" /><path d="M0 3h6.500L3.300 6.200z" fill="#222" /></Icon>
          </Slot>
        </QuickAccess>
        <TitleText>FSE_Project List.pdf * - Foxit Reader</TitleText>
        <Slot $w={2} />
        <Slot $w={36} $down={-5}><FullScreenIcon /></Slot>
        <Slot $w={35} $down={-5}><MinIcon /></Slot>
        <Slot $w={35} $down={-5}><RestoreIcon /></Slot>
        <Slot $w={16} $down={-5}><CloseIcon /></Slot>
      </TitleBar>

      <MenuRow>
        <FileTab>File</FileTab>
        <MenuTab $w={62} $active>Home</MenuTab>
        {menuTabs.map(([t, w]) => (
          <MenuTab key={t} $w={w}>{t}</MenuTab>
        ))}
        <MenuTools>
          <Slot $w={21} $down={1}>
            <Icon w={17} h={16}>
              <path d="M0 1h5l1 1h8v12H0z" fill={AMBER} />
              <path d="M2 14l3-8h5" stroke="#fdf3e0" />
              <circle cx="10" cy="9" r="4.200" fill="#f6f0e6" stroke="#555" strokeWidth="1.500" />
              <path d="M13 12l3.200 3" stroke="#555" strokeWidth="2" />
            </Icon>
          </Slot>
          <FindBox>
            Find
            <Icon w={16} h={16}>
              <circle cx="10" cy="6.500" r="4.500" fill="#e6f7fd" stroke="#3793cc" strokeWidth="1.800" />
              <path d="M6.500 10L1 15.500" stroke="#2f5f9e" strokeWidth="2.600" />
            </Icon>
          </FindBox>
          <Slot $w={24}>
            <Slot $w={5} />
            <Icon w={14} h={14}>
              <circle cx="7" cy="7" r="6" stroke="#555" strokeWidth="1.600" strokeDasharray="2.200 1.400" />
              <circle cx="7" cy="7" r="5.200" fill="#f6f6f6" />
              <circle cx="7" cy="7" r="1.500" stroke="#555" />
            </Icon>
          </Slot>
          <Slot $w={14}><Caret /></Slot>
          <Slot $w={28}>
            <Icon w={9} h={13}><path d="M7.500.8v11.400L1 6.500z" stroke="#aaa" fill="#f7f7f7" /></Icon>
          </Slot>
          <Slot $w={22}>
            <Icon w={9} h={13}><path d="M.8.800v11.400l6.500-5.700z" stroke="#aaa" fill="#f7f7f7" /></Icon>
          </Slot>
          <Slot $w={25}>
            <Icon w={16} h={16}>
              <path d="M0 0h16v16H0z" fill="#b4b4b4" />
              <path d="M3 16c0-3 1-3.500 3.500-4.500C4.500 9 4.500 3 8 3s3.500 6 1.500 8.500C12 12.500 13 13 13 16z" fill="#fff" />
            </Icon>
          </Slot>
          <Slot $w={16}><Caret /></Slot>
          <Slot $w={12} $down={2}>
            <Icon w={10} h={8}><path d="M.8 4.500L5 .8l4.200 3.700-1 1.200H1.800zM2.500 7L5 4.800 7.500 7z" stroke="#666" fill="#fff" /></Icon>
          </Slot>
        </MenuTools>
      </MenuRow>

      <Ribbon>
        <Group $w={182}>
          <GroupBody $left={3}>
            <BigButton $w={43}><BigIcon><HandIcon /></BigIcon>Hand</BigButton>
            <BigButton $w={44} $on><BigIcon><SelectIcon /></BigIcon>Select<DropCaret><Caret /></DropCaret></BigButton>
            <Slot $w={4} />
            <Col>
              <SmallButton><CameraIcon />SnapShot</SmallButton>
              <SmallButton>
                <ClipboardIcon />
                <Slot $w={51}>Clipboard</Slot>
                <Caret />
              </SmallButton>
            </Col>
          </GroupBody>
          <GroupLabel $shift={-3}>Tools</GroupLabel>
        </Group>
        <Group $w={261}>
          <GroupBody>
            <BigButton $w={52} $ls={0.15}><BigIcon><ActualSizeIcon /></BigIcon>Actual<br />Size</BigButton>
            <Col $w={79}>
              <SmallButton><FitIcon kind="page" />Fit Page</SmallButton>
              <SmallButton><FitIcon kind="width" />Fit Width</SmallButton>
              <SmallButton><FitIcon kind="visible" />Fit Visible</SmallButton>
            </Col>
            <Col>
              <SmallButton><Magnifier /><ZoomField>158.09%<Caret /></ZoomField><Magnifier plus /></SmallButton>
              <SmallButton><RotateIcon />Rotate Left</SmallButton>
              <SmallButton><RotateIcon right />Rotate Right</SmallButton>
            </Col>
          </GroupBody>
          <GroupLabel $shift={-3}>View</GroupLabel>
        </Group>
        <Group $w={135}>
          <GroupBody $left={8}>
            <BigButton $w={63} $ls={0.3}><BigIcon><TypewriterIcon /></BigIcon>Typewriter</BigButton>
            <BigButton $w={61} $ls={-0.1}><BigIcon><HighlightIcon /></BigIcon>Highlight</BigButton>
          </GroupBody>
          <GroupLabel $shift={-3}>Comment</GroupLabel>
        </Group>
        <Group $w={160}>
          <GroupBody $left={2}>
            <BigButton $w={45} $ls={0.3}><BigIcon><FromFileIcon /></BigIcon>From<br />File</BigButton>
            <Slot $w={3} />
            <Col>
              <SmallButton><ScannerIcon />From Scanner</SmallButton>
              <SmallButton><BlankIcon />Blank</SmallButton>
              <SmallButton><FromClipIcon />From Clipboard</SmallButton>
            </Col>
          </GroupBody>
          <GroupLabel $shift={-4}>Create</GroupLabel>
        </Group>
        <Group $w={51}>
          <GroupBody>
            <BigButton $w={49}><BigIcon><SignIcon /></BigIcon>PDF<br />Sign</BigButton>
          </GroupBody>
          <GroupLabel $shift={-3}>Protect</GroupLabel>
        </Group>
        <Group $w={91}>
          <GroupBody $left={8}>
            <Col>
              <SmallButton><LinkIcon />Link</SmallButton>
              <SmallButton><BookmarkIcon />Bookmark</SmallButton>
            </Col>
          </GroupBody>
          <GroupLabel $shift={-4}>Links</GroupLabel>
        </Group>
        <Group $w={137}>
          <GroupBody $left={8}>
            <Col>
              <SmallButton><AttachIcon />File Attachment</SmallButton>
              <SmallButton><ImageNoteIcon />Image Annotation</SmallButton>
              <SmallButton><FilmIcon />Audio &amp; Video</SmallButton>
            </Col>
          </GroupBody>
          <GroupLabel $shift={-3}>Insert</GroupLabel>
        </Group>
      </Ribbon>

      <DocTabs>
        <DocTab $w={158} $pad={17}>
          <svg className="shape" width="158" height="25" viewBox="0 0 158 25" fill="none">
            <path d="M.5 24C5 18 7 8 10.500 3.500 12 1.500 13 .5 16 .5h130c4 0 6 1 7.500 3l4.500 8" stroke="#a0a0a0" fill="#f0f0f0" />
          </svg>
          <span>Start</span>
        </DocTab>
        <DocTab $w={193} $pad={17} $overlap $ls={0.33}>
          <svg className="shape" width="193" height="25" viewBox="0 0 193 25">
            <path d="M0 25C5 18 7 8 10.500 3.500 12 1.500 13 .5 16 .5h161c4 0 6 1 7.500 3C187 8 188 17 193 25z" fill="#fdfdfd" />
            <path d="M0 24.500C5 18 7 8 10.500 3.500 12 1.500 13 .5 16 .5h161c4 0 6 1 7.500 3C187 8 188 17 193 24.500" stroke="#a0a0a0" fill="none" />
          </svg>
          <span>FSE_Project List.pdf *</span>
          <CloseMark><Icon w={8} h={8}><path d="M.7.700l6.600 6.600M7.300.700L.7 7.300" stroke="#222" strokeWidth="1.600" /></Icon></CloseMark>
        </DocTab>
        <TabListCaret />
        <Promo>
          <PromoText>Document<br />Translation</PromoText>
          <Icon w={29} h={28}>
            <path d="M24 7v-1l-5-5H4C2 1 1 2 1 4v20c0 2 1 3 3 3h16" stroke="#fff" strokeWidth="1.200" />
            <path d="M18.500 1v5.500H24V16" stroke="#fff" strokeWidth="1.200" />
            <circle cx="12.500" cy="15" r="8.500" stroke="#fff" strokeWidth="1.200" />
            <path d="M19 21l8 6" stroke="#fff" strokeWidth="3" />
            <text x="5.500" y="18.500" fill="#fff" fontSize="11" fontFamily="Lato, sans-serif" letterSpacing="0">Aa</text>
          </Icon>
        </Promo>
      </DocTabs>

      <Workspace>
        <SideBar>
          <SideTop><Icon w={6} h={10}><path d="M0 0l5.500 4.700L0 9.500z" fill="#111" /></Icon></SideTop>
          {sideIcons.map((I, i) => (
            <SideItem key={i}><I /></SideItem>
          ))}
        </SideBar>
        <Gutter><Grip /></Gutter>
        <Page>
          <Heading $top={29}><span>1.5.2.1</span>Biểu mẫu 1 và qui định 1</Heading>
          <Table $top={23}>
            <Row>
              <Cell $w={83}><Bar>BM1:</Bar></Cell>
              <Cell $w={619}><Bar>Danh Sách Khám Bệnh</Bar></Cell>
            </Row>
            <Row $h={36}>
              <Cell $w={702} $p="5px 75px 0 0">Ngày khám:<Dots>{dots(36)}</Dots></Cell>
            </Row>
            <Row>
              {listCols.map(([t, w, p]) => (
                <Cell key={t} $w={w} $p={p}><Bar $h={23}>{t}</Bar></Cell>
              ))}
            </Row>
            {['1', '2'].map(n => (
              <Row key={n}>
                {listCols.map(([t, w], i) => (
                  <Cell key={t} $w={w} $p="4px 8px 0 7px">{i === 0 ? n : null}</Cell>
                ))}
              </Row>
            ))}
          </Table>
          <Rule>QĐ1: Mỗi ngày khám tối đa 40 bệnh nhân.</Rule>
          <Heading $top={28}><span>1.5.2.2</span>Biểu mẫu 2 và qui định 2</Heading>
          <Table $top={24}>
            <Row>
              <Cell $w={83}><Bar>BM2:</Bar></Cell>
              <Cell $w={619}><Bar>Phiếu Khám Bệnh</Bar></Cell>
            </Row>
            <Row>
              <Field $w={351} $p="4px 12px 0 10px"><span>Họ tên:</span><Dots>{dots(52)}</Dots></Field>
              <Field $w={351} $p="4px 13px 0 10px"><span>Ngày khám:</span><Dots>{dots(44)}</Dots></Field>
            </Row>
            <Row>
              <Field $w={351} $p="4px 12px 0 10px"><span>Triệu chứng:</span><Dots>{dots(44)}</Dots></Field>
              <Field $w={351} $p="4px 13px 0 10px"><span>Dự đoán loại bệnh:</span><Dots>{dots(33)}</Dots></Field>
            </Row>
            <Row>
              <Cell $w={68} $p="6px 8px 0 7px"><Bar>STT</Bar></Cell>
              <Cell $w={174} $p="6px 6px 0 7px"><Bar>Thuốc</Bar></Cell>
              <Heavy $w={166} $p="4px 7px 0 8px"><Bar>Đơn Vị</Bar></Heavy>
              <Cell $w={146} $p="6px 7px 0 6px"><Bar>Số Lượng</Bar></Cell>
              <Cell $w={149} $p="6px 7px 0 7px"><Bar>Cách Dùng</Bar></Cell>
            </Row>
          </Table>
        </Page>
        <RightGutter />
        <ScrollBar>
          <SplitBox />
          <UpArrow />
          <Thumb />
          <DownArrow />
        </ScrollBar>
      </Workspace>

      <StatusBar>
        <Slot $w={27}><Icon w={14} h={13}><path d="M6.500 0v13L0 6.500zM9.500 0v13L6.800 6.500zM10.500 0H12v13h-1.500z" fill="#1e1e1e" /></Icon></Slot>
        <Slot $w={19}><Icon w={8} h={13}><path d="M7 0v13L0 6.500z" fill="#1e1e1e" /></Icon></Slot>
        <PageField>11 / 25<Caret /></PageField>
        <Slot $w={24}><Icon w={9} h={13}><path d="M1 0v13l7-6.500z" fill="#1e1e1e" /></Icon></Slot>
        <Slot $w={24}><Icon w={14} h={13}><path d="M0 0h1.500v13H0zM3 0v13l2.700-6.500zM6 0v13l6.500-6.500z" fill="#1e1e1e" /></Icon></Slot>
        <Slot $w={26}><ThumbsIcon /></Slot>
        <Slot $w={229}><ThumbsIcon faded /></Slot>
        <ViewMode $w={20}><SheetIcon /></ViewMode>
        <Slot $w={4} />
        <ViewMode $w={24} $on><ContinuousIcon /></ViewMode>
        <ViewMode $w={25}><FacingIcon /></ViewMode>
        <ViewMode $w={27}><FacingContinuousIcon /></ViewMode>
        <Slot $w={14} />
        <ZoomText>158.09%</ZoomText>
        <Slot $w={9}><Caret /></Slot>
        <Icon w={135} h={17}>
          <g stroke="#333">
            <circle cx="8.500" cy="7.500" r="7" />
            <path d="M5 7.500h7M23 8.500h91M68.500 5v7M122.500 7.500h7M126 4v7" />
            <circle cx="126" cy="7.500" r="7" />
          </g>
          <path d="M73 4.500h4v8h-4z" fill="#222" />
        </Icon>
      </StatusBar>

      <TaskBar>
        <TaskWallpaper />
        <TaskItem $w={54}><StartOrb /></TaskItem>
        <TaskItem $w={68}><IeIcon /></TaskItem>
        <TaskItem $w={51} $lit={0.7}><ExplorerIcon /></TaskItem>
        <StackEdge /><StackEdge />
        <TaskItem $w={32} $ml={17}><MediaIcon /></TaskItem>
        <TaskItem $w={59} $ml={16} $lit={0.75}><CocIcon /></TaskItem>
        <TaskItem $w={30} $ml={17}><GearRedIcon /></TaskItem>
        <TaskItem $w={32} $ml={31}><CBlueIcon /></TaskItem>
        <TaskItem $w={32} $ml={30}><GarenaIcon /></TaskItem>
        <TaskItem $w={59} $ml={16} $lit={0.5}><CubeIcon /></TaskItem>
        <TaskItem $w={59} $ml={3} $lit={0.85}><FoxitBig /></TaskItem>
        <TaskItem $w={59} $ml={3} $lit={0.5}><PaintIcon /></TaskItem>
        <Tray>
          <Lang>EN</Lang>
          <Slot $w={21}><Icon w={8} h={5}><path d="M0 4.500L4 0l4 4.500z" fill="#fff" /></Icon></Slot>
          <Slot $w={25}>
            <Icon w={16} h={16}>
              <rect width="16" height="16" rx="1" fill="#a9b4ee" />
              <rect x="1" y="1" width="14" height="14" fill="#dfe4fb" />
              <path d="M12 4H8.500C5.500 4 4.500 6 4.500 8s1 4 4 4H12M5 8h6.500" stroke="#4a53b8" strokeWidth="2" />
            </Icon>
          </Slot>
          <Slot $w={23}>
            <Icon w={15} h={16}><path d="M1.500 1v15" stroke="#fff" strokeWidth="1.500" /><path d="M2.500 2h5l1 2h6l-2 3 1 1H8l-1-1H2.500z" fill="#fff" /></Icon>
          </Slot>
          <Slot $w={24}>
            <Icon w={15} h={16}>
              <path d="M6 3V1.500H3.500V3H1v12h7v-3" stroke="#fff" strokeWidth="1.500" />
              <path d="M7 1h1.500v3h2V1H12v3h2v3c0 2-1.500 3-2.500 3v3c0 2-3 3-5 2 2 0 3-1 3-2v-3C7 9.500 5.500 9 5.500 7V4H7z" fill="#fff" />
            </Icon>
          </Slot>
          <Slot $w={25}>
            <Icon w={16} h={16}>
              <path d="M5.500 4.500h9v7h-9zM7 14.500h7M10.500 12v2" stroke="#fff" strokeWidth="1.400" />
              <path d="M0 1h1v3h2V1h1v5L3 7.500v5h2V14H1.500V7.500L0 6z" fill="#fff" />
            </Icon>
          </Slot>
          <Slot $w={20}>
            <Icon w={16} h={16}>
              <path d="M1 5.500h2.500L7 2v12l-3.500-3.500H1z" stroke="#fff" fill="#ddd" />
              <path d="M9 6c1 1 1 3 0 4M11 4.500c2 2 2 5 0 7M13 3c3 3 3 7 0 10" stroke="#fff" />
            </Icon>
          </Slot>
          <Clock>2:47 PM<br />9/17/2017</Clock>
          <ShowDesktop />
        </Tray>
      </TaskBar>
    </Window>
  );
}
